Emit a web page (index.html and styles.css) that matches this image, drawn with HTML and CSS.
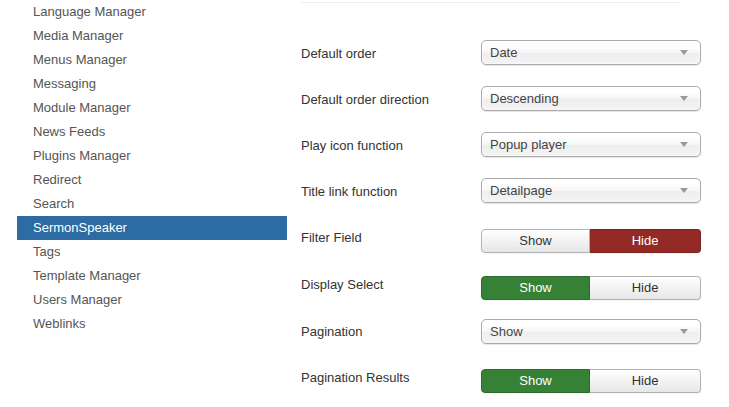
FILE: index.html
```html
<!DOCTYPE html>
<html>
<head>
<meta charset="utf-8">
<link rel="stylesheet" href="styles.css">
</head>
<body>
<div class="page">
  <ul class="sidenav">
    <li>Language Manager</li>
    <li>Media Manager</li>
    <li>Menus Manager</li>
    <li>Messaging</li>
    <li>Module Manager</li>
    <li>News Feeds</li>
    <li>Plugins Manager</li>
    <li>Redirect</li>
    <li>Search</li>
    <li class="active">SermonSpeaker</li>
    <li>Tags</li>
    <li>Template Manager</li>
    <li>Users Manager</li>
    <li>Weblinks</li>
  </ul>
  <div class="main">
    <div class="rule"></div>
    <div class="form">
      <div class="row">
        <div class="label">Default order</div>
        <div class="select"><span>Date</span><i class="arrow"></i></div>
      </div>
      <div class="row">
        <div class="label">Default order direction</div>
        <div class="select"><span>Descending</span><i class="arrow"></i></div>
      </div>
      <div class="row">
        <div class="label">Play icon function</div>
        <div class="select"><span>Popup player</span><i class="arrow"></i></div>
      </div>
      <div class="row">
        <div class="label">Title link function</div>
        <div class="select"><span>Detailpage</span><i class="arrow"></i></div>
      </div>
      <div class="row row-btn">
        <div class="label">Filter Field</div>
        <div class="btngroup"><span class="btn">Show</span><span class="btn btn-danger">Hide</span></div>
      </div>
      <div class="row row-btn">
        <div class="label">Display Select</div>
        <div class="btngroup"><span class="btn btn-success">Show</span><span class="btn">Hide</span></div>
      </div>
      <div class="row">
        <div class="label">Pagination</div>
        <div class="select sel-low"><span>Show</span><i class="arrow"></i></div>
      </div>
      <div class="row row-btn">
        <div class="label">Pagination Results</div>
        <div class="btngroup"><span class="btn btn-success">Show</span><span class="btn">Hide</span></div>
      </div>
    </div>
  </div>
</div>
</body>
</html>
```
FILE: styles.css
```css
html, body {
  margin: 0;
  padding: 0;
  background: #fff;
}
body {
  font-family: "Liberation Sans", Arial, sans-serif;
  font-size: 13px;
  color: #333;
}
.page {
  display: flex;
  align-items: flex-start;
}
.sidenav {
  list-style: none;
  margin: 0 0 0 17px;
  padding: 0;
  width: 270px;
}
.sidenav li {
  height: 24px;
  line-height: 24px;
  padding: 0 16px;
  color: #555;
}
.sidenav li.active {
  background: #2d6ca2;
  color: #fff;
}
.main {
  margin-left: 14px;
  width: 400px;
}
.rule {
  margin-top: 2px;
  width: 379px;
  height: 1px;
  background: #eee;
}
.form {
  padding-top: 36px;
}
.row {
  display: flex;
  align-items: flex-start;
  height: 46px;
}
.row-btn {
  height: 47px;
}
.label {
  width: 180px;
  padding-top: 6px;
  line-height: 18px;
  color: #333;
}
.select {
  box-sizing: border-box;
  margin-top: 1px;
  width: 220px;
  height: 25px;
  border: 1px solid #aaa;
  border-radius: 5px;
  background: linear-gradient(#fff 20%, #f6f6f6 50%, #eee 52%, #f4f4f4 100%);
  box-shadow: inset 0 0 3px #fff, 0 1px 1px rgba(0,0,0,0.1);
  display: flex;
  align-items: center;
  justify-content: space-between;
  padding: 0 8px 0 8px;
  color: #444;
  line-height: 23px;
}
.sel-low {
  margin-top: 2px;
}
.arrow {
  width: 0;
  height: 0;
  border-left: 4px solid transparent;
  border-right: 4px solid transparent;
  border-top: 5px solid #999;
  margin-right: 4px;
}
.btngroup {
  margin-top: 6px;
  width: 220px;
  height: 24px;
  display: grid;
  grid-template-columns: 109px 111px;
}
.btn {
  box-sizing: border-box;
  height: 24px;
  line-height: 22px;
  text-align: center;
  border: 1px solid #b3b3b3;
  background: linear-gradient(#fff, #e6e6e6);
  color: #333;
  box-shadow: 0 1px 2px rgba(0,0,0,0.05);
}
.btn:first-child {
  border-radius: 4px 0 0 4px;
}
.btn:last-child {
  border-radius: 0 4px 4px 0;
  border-left: 0;
}
.btn-success {
  background: #378137;
  border-color: #2e6b2e;
  color: #fff;
}
.btn-danger {
  background: #942a25;
  border-color: #7d231f;
  color: #fff;
}
```
